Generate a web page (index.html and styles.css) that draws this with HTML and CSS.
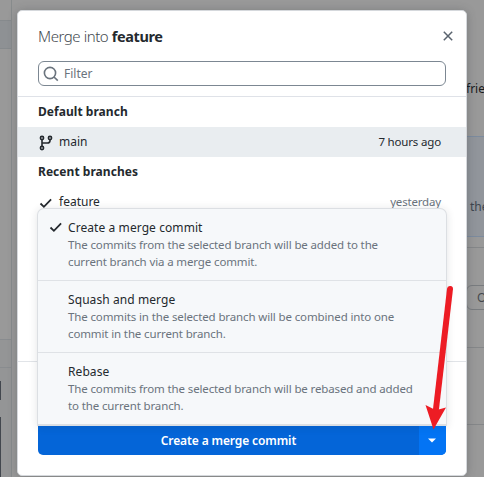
FILE: index.html
```
<!DOCTYPE html>
<html lang="en">
<head>
<meta charset="utf-8">
<title>Merge into feature</title>
<link rel="stylesheet" href="styles.css">
</head>
<body>
<div class="app">
  <aside class="sidebar">
    <div class="side-top"></div>
    <div class="side-tab"></div>
    <div class="side-space"></div>
    <div class="side-commit"></div>
    <div class="side-form"><div class="side-input"></div><div class="side-area"></div></div>
  </aside>
  <main class="content">
    <div class="intro">frie</div>
    <div class="notice">the</div>
    <div class="suggestion"><span class="back-button">O</span></div>
    <div class="panel"></div>
    <div class="panel-end"></div>
  </main>
</div>
<section class="dialog">
  <header class="header">
    <h1 class="title">Merge into <b>feature</b></h1>
    <svg class="close" width="12" height="12" viewBox="0 0 12 12"><path d="M1.8 1.8l8.4 8.4M10.2 1.8l-8.4 8.4"/></svg>
  </header>
  <div class="filter">
    <svg width="16" height="16" viewBox="0 0 16 16"><circle cx="7" cy="7" r="5.6"/><path d="M11 11l3.8 3.6"/></svg>
    <span>Filter</span>
  </div>
  <div class="list">
    <h2 class="group">Default branch</h2>
    <div class="branch selected">
      <svg class="fork" width="14" height="16" viewBox="0 0 14 16"><circle cx="3" cy="3" r="1.6"/><circle cx="11" cy="3" r="1.6"/><circle cx="3" cy="13" r="1.6"/><path d="M3 4.6v6.8M11 4.6v.8q0 2.6-2.6 2.6H3"/></svg>
      <span class="name">main</span><span class="date">7 hours ago</span>
    </div>
    <h2 class="group">Recent branches</h2>
    <div class="branch">
      <svg class="check" width="14" height="12" viewBox="0 0 14 12"><path d="M1.5 6.5l3.4 3.3 7.2-7.5"/></svg>
      <span class="name">feature</span><span class="date muted">yesterday</span>
    </div>
  </div>
  <footer class="footer">
    <div class="merge">
      <div class="merge-label">Create a merge commit</div>
      <div class="merge-toggle"><svg width="8" height="5" viewBox="0 0 8 5"><path d="M0 .5h8L4 4.5z"/></svg></div>
    </div>
  </footer>
</section>
<div class="menu">
  <div class="option">
    <svg class="check" width="14" height="12" viewBox="0 0 14 12"><path d="M1.5 6.5l3.4 3.3 7.2-7.5"/></svg>
    <div class="option-title">Create a merge commit</div>
    <p>The commits from the selected branch will be added to the<br>current branch via a merge commit.</p>
  </div>
  <div class="option">
    <div class="option-title">Squash and merge</div>
    <p>The commits in the selected branch will be combined into one<br>commit in the current branch.</p>
  </div>
  <div class="option">
    <div class="option-title">Rebase</div>
    <p>The commits from the selected branch will be rebased and added<br>to the current branch.</p>
  </div>
</div>
<svg class="arrow" width="30" height="150" viewBox="0 0 30 150"><path class="shaft" d="M25 9L11 129"/><path class="head" d="M0.5 125L8.5 129L13.5 129.5L21 127.5L8.5 149.5z"/></svg>
</body>
</html>
```

FILE: styles.css
```
* { box-sizing: border-box; }
body {
  margin: 0; width: 484px; height: 477px; overflow: hidden; position: relative;
  font-family: "Noto Sans", sans-serif; font-size: 12px; line-height: 17px; color: #24292e;
  background: #999;
}
h1, h2, p { margin: 0; font-size: inherit; font-weight: normal; }
svg { display: block; fill: none; stroke: currentColor; }
.app { display: flex; justify-content: space-between; height: 477px; }
.sidebar { width: 12px; border-right: 1px solid #878b8c; display: flex; flex-direction: column; }
.side-top { height: 20px; }
.side-tab { height: 30px; background: #8e9194; border: solid #868a8d; border-width: 1px 0; }
.side-space { height: 295px; }
.side-commit { height: 30px; background: #949596; border: solid #898c8f; border-width: 1px 0; }
.side-form { flex: 1; background: #949596; padding-top: 13px; }
.side-input { width: 1px; height: 19px; background: #42474e; }
.side-area { width: 1px; height: 60px; margin-top: 17px; background: #42474e; }
.content { width: 18px; font-size: 12px; }
.intro { height: 136px; padding-top: 80px; color: #17191c; }
.notice { height: 101px; padding: 61px 0 0 4px; background: #91959b; border: solid #7c8b9e; border-width: 1px 0; color: #3d454e; }
.suggestion { margin-top: 10px; height: 101px; border: solid #858789; border-width: 1px 0; padding-top: 37px; }
.back-button { display: block; width: 30px; height: 25px; border: 1px solid #797c7f; border-radius: 6px; padding: 3px 0 0 10px; color: #45494e; }
.panel { height: 77px; border-bottom: 1px solid #858789; }
.dialog {
  position: absolute; left: 17px; top: 10px; width: 450px; height: 466px;
  display: flex; flex-direction: column; background: #fff; border: 1px solid #d5d8dc; border-radius: 5px;
  box-shadow: 0 1px 10px rgba(50, 55, 60, .3);
}
.header { height: 50px; padding: 0 12px 0 20px; display: flex; align-items: center; justify-content: space-between; }
.title { font-size: 15px; line-height: 22px; font-weight: 300; letter-spacing: -.44px; color: #444a50; }
.title b { font-size: 14.5px; font-weight: 700; letter-spacing: -.4px; color: #24292e; }
.close { color: #59636e; stroke-width: 1.5; }
.filter { height: 25px; margin: 0 20px; padding-left: 4px; display: flex; align-items: center; gap: 5px; border: 1px solid #7c8792; border-radius: 6px; color: #6a737d; }
.filter svg { stroke-width: 1.6; }
.list { height: 265px; margin-top: 10px; border-top: 1px solid #dfe2e8; }
.group { height: 30px; padding: 0 20px; line-height: 29px; font-weight: 700; letter-spacing: .04px; }
.branch { height: 30px; padding: 0 25px 1px 21px; display: flex; align-items: center; }
.selected { background: #e9edf0; }
.branch svg { width: 14px; margin-right: 6px; position: relative; top: 1px; }
.fork { stroke-width: 1.6; }
.check { stroke-width: 1.8; }
.name { flex: 1; }
.date { font-size: 11.5px; letter-spacing: -.17px; }
.muted { color: #6a737d; }
.footer { flex: 1; border-top: 1px solid #e1e4e8; padding: 64px 20px 0; }
.merge { height: 29px; display: flex; background: #0465d8; color: #fff; border-radius: 0 0 5px 5px; overflow: hidden; }
.merge-label { flex: 1; text-align: center; line-height: 29px; font-weight: 600; letter-spacing: -.12px; }
.merge-toggle { width: 27px; background: #0374f4; display: flex; align-items: center; justify-content: center; }
.merge-toggle svg { fill: #fff; stroke: none; margin-right: 2px; }
.menu { position: absolute; left: 37px; top: 208px; width: 410px; height: 218px; background: #f6f8fa; border: 1px solid #dcdfe3; border-bottom-width: 2px; border-radius: 7px 7px 0 0; box-shadow: 0 1px 8px rgba(30, 40, 50, .12); }
.option { height: 72px; padding: 10px 0 0 30px; position: relative; border-bottom: 1px solid #dfe2e6; white-space: nowrap; }
.option-title { letter-spacing: .08px; }
.option:last-child { border-bottom: 0; }
.option .check { position: absolute; left: 11px; top: 12px; }
.option p { font-size: 11.5px; letter-spacing: -.13px; color: #6a737d; }
.arrow { position: absolute; left: 425px; top: 280px; }
.shaft { stroke: #ed1c24; stroke-width: 6; stroke-linecap: round; }
.head { fill: #ed1c24; stroke: none; }
```
